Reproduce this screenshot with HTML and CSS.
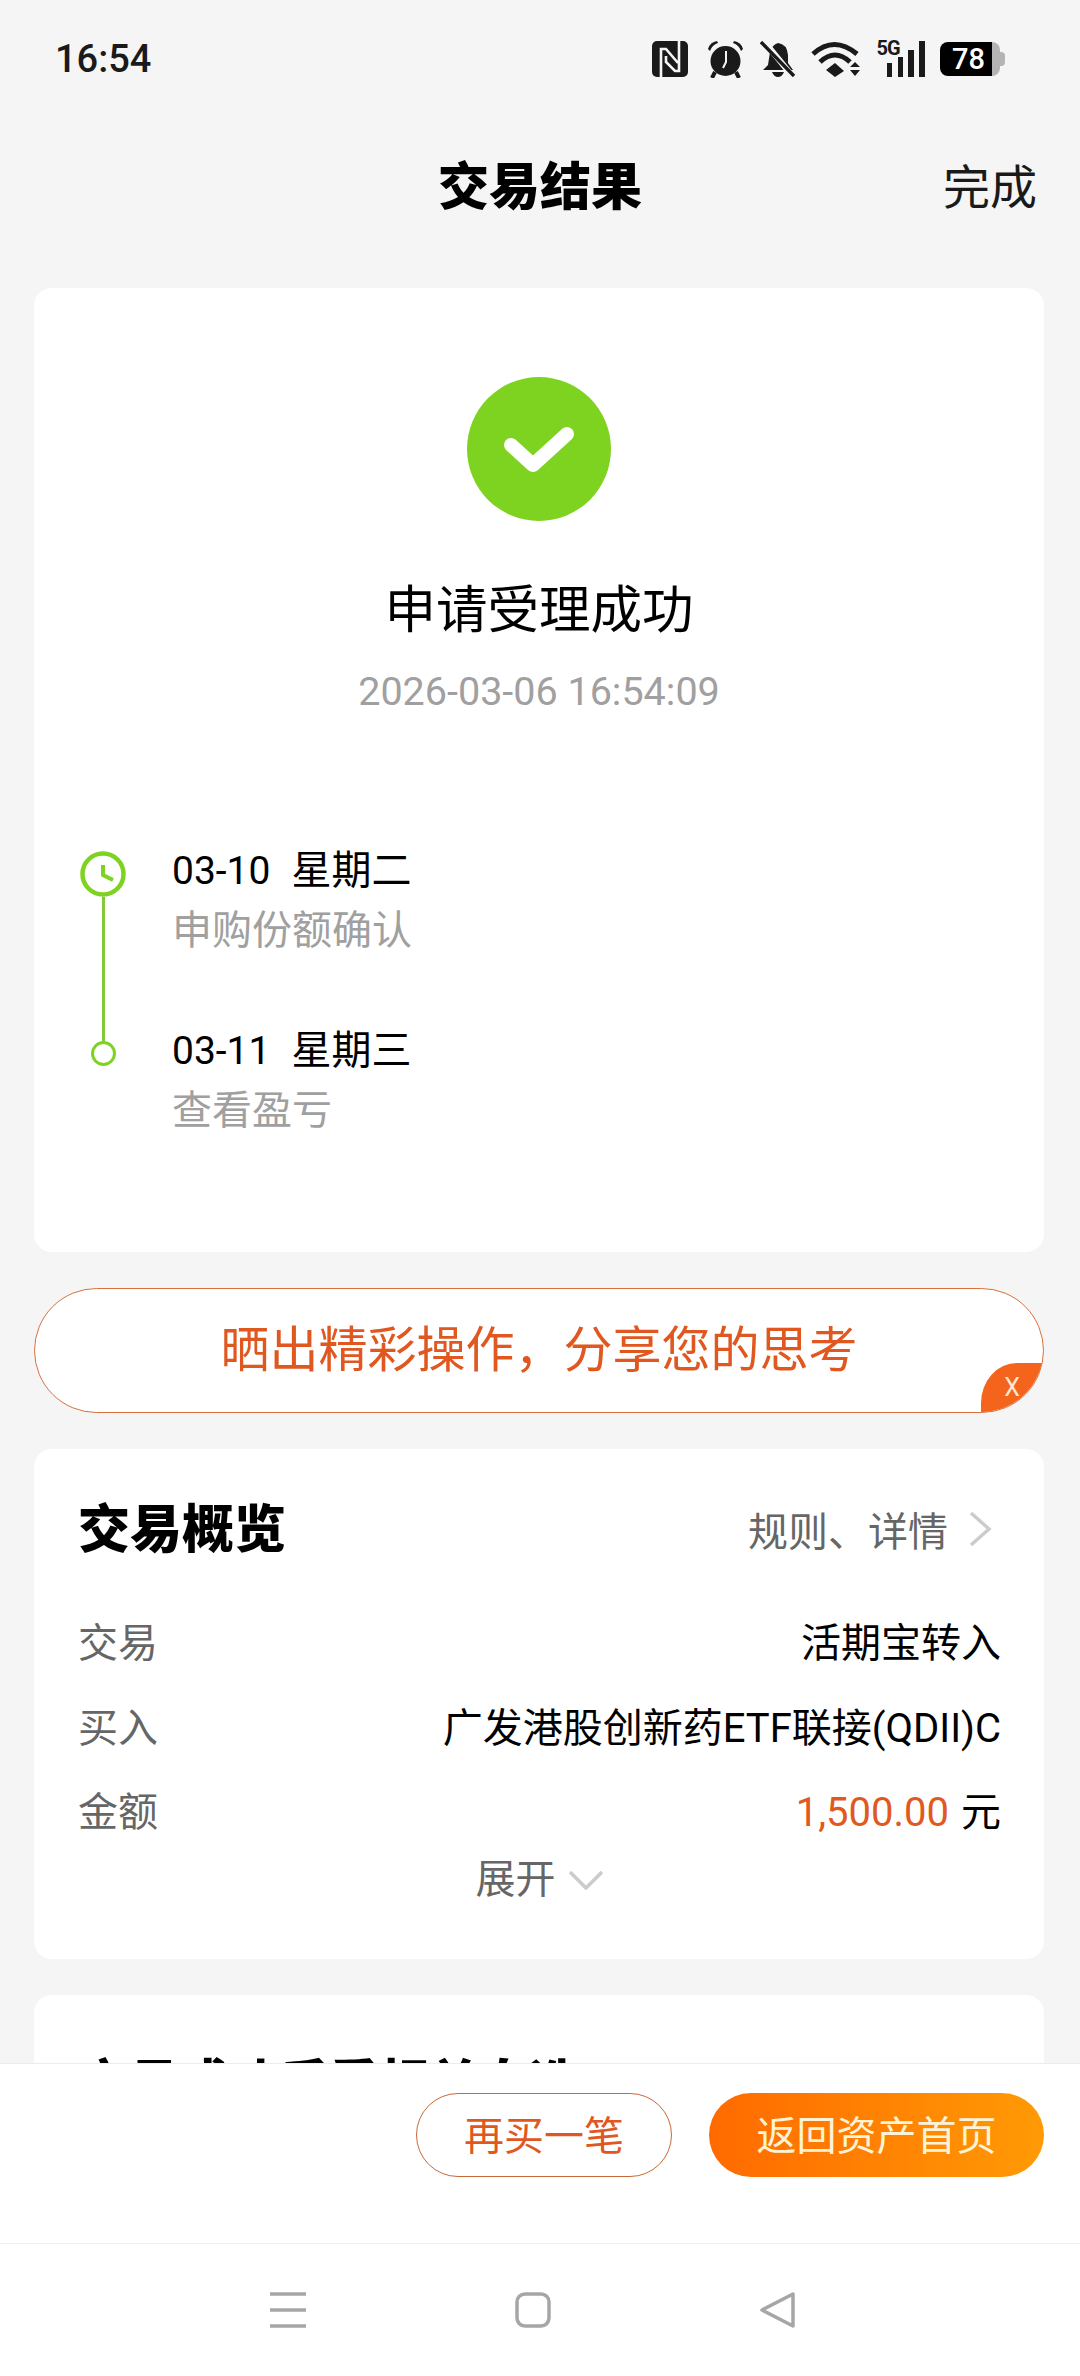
FILE: index.html
```html
<!DOCTYPE html>
<html lang="zh-CN">
<head>
    <meta charset="UTF-8">
    <meta name="viewport" content="width=device-width, initial-scale=1.0">
    <title>交易结果</title>
    <link rel="stylesheet" href="styles.css">
</head>
<body>
<div class="screen">
    <div class="status-bar">
        <span class="status-time">16:54</span>
        <div class="status-icons">
            <svg class="icon-nfc" width="36" height="36" viewBox="0 0 36 36">
                <rect width="36" height="36" rx="5" fill="#1a1a1a"/>
                <path d="M9 36V8h5l12 14M14 15v6l9 9h4V0" fill="none" stroke="#f5f5f5" stroke-width="2.6"/>
            </svg>
            <svg class="icon-alarm" width="37" height="38" viewBox="0 0 37 38">
                <circle cx="18.5" cy="21" r="15" fill="#1a1a1a"/>
                <path d="M1 9Q3 2 10 1L11 3Q5 5 3 11ZM36 9Q34 2 27 1L26 3Q32 5 34 11Z" fill="#1a1a1a"/>
                <path d="M8 32L5 38M29 32L32 38" stroke="#1a1a1a" stroke-width="4"/>
                <path d="M19 11V22L16 28" fill="none" stroke="#f5f5f5" stroke-width="2"/>
            </svg>
            <svg width="36" height="36" viewBox="0 0 36 36">
                <path d="M18 2Q27 3 28 14V22L33 29H3L8 24L10 11Q12 4 18 2ZM12 31H24Q22 36 18 36Q14 36 12 31Z" fill="#1a1a1a"/>
                <path d="M3 -1L33 36" stroke="#f5f5f5" stroke-width="6"/>
                <path d="M1 1L34 35" stroke="#1a1a1a" stroke-width="3.4"/>
            </svg>
            <svg width="50" height="36" viewBox="0 0 50 36">
                <path d="M2 13Q23 -6 46 13M9 21Q24 7 39 21" fill="none" stroke="#1a1a1a" stroke-width="5"/>
                <path d="M24 22L33 30L24 36L15 29Z" fill="#1a1a1a"/>
                <path d="M44 21L49 26H39ZM39 29H49L44 35Z" fill="#1a1a1a"/>
            </svg>
            <div class="net">
                <span class="net-label">5G</span>
                <svg width="48" height="36" viewBox="0 0 48 36">
                    <rect x="10" y="22" width="5" height="14" fill="#1a1a1a"/>
                    <rect x="21" y="16" width="5" height="20" fill="#1a1a1a"/>
                    <rect x="31" y="9" width="6" height="27" fill="#1a1a1a"/>
                    <rect x="42" y="0" width="6" height="36" fill="#1a1a1a"/>
                </svg>
            </div>
            <div class="battery">78</div>
        </div>
    </div>

    <div class="nav-bar">
        <h1 class="nav-title">交易结果</h1>
        <span class="nav-done">完成</span>
    </div>

    <div class="content">
        <section class="card card-result">
            <svg class="result-icon" width="144" height="144" viewBox="0 0 144 144">
                <circle cx="72" cy="72" r="72" fill="#7ed321"/>
                <path d="M44 68L66 88L100 57" fill="none" stroke="#fff" stroke-width="14" stroke-linecap="round" stroke-linejoin="round"/>
            </svg>
            <div class="result-title">申请受理成功</div>
            <div class="result-time">2026-03-06 16:54:09</div>

            <div class="timeline">
                <div class="rail">
                    <svg width="46" height="46" viewBox="0 0 46 46">
                        <circle cx="23" cy="23" r="20.5" fill="#fff" stroke="#7ed321" stroke-width="4.5"/>
                        <path d="M23 14V24L33 29" fill="none" stroke="#7ed321" stroke-width="4"/>
                    </svg>
                    <span class="rail-line"></span>
                    <span class="rail-dot"></span>
                </div>
                <div class="steps">
                    <div class="step">
                        <div class="step-date">03-10<span class="step-day">星期二</span></div>
                        <div class="step-desc">申购份额确认</div>
                    </div>
                    <div class="step">
                        <div class="step-date">03-11<span class="step-day">星期三</span></div>
                        <div class="step-desc">查看盈亏</div>
                    </div>
                </div>
            </div>
        </section>

        <div class="share-banner">
            晒出精彩操作，分享您的思考
            <span class="share-close">X</span>
        </div>

        <section class="card card-overview">
            <div class="card-head">
                <h2 class="card-title">交易概览</h2>
                <div class="card-link">
                    规则、详情
                    <svg width="24" height="36" viewBox="0 0 24 36">
                        <path d="M3 2L21 18L3 34" fill="none" stroke="#cccccc" stroke-width="3.5"/>
                    </svg>
                </div>
            </div>
            <div class="rows">
                <div class="row"><span class="row-label">交易</span><span>活期宝转入</span></div>
                <div class="row"><span class="row-label">买入</span><span>广发港股创新药ETF联接(QDII)C</span></div>
                <div class="row"><span class="row-label">金额</span><span><span class="amount">1,500.00</span>元</span></div>
            </div>
            <div class="toggle">
                展开
                <svg width="36" height="20" viewBox="0 0 36 20">
                    <path d="M2 2L18 18L34 2" fill="none" stroke="#cccccc" stroke-width="3.5"/>
                </svg>
            </div>
        </section>

        <section class="card card-next">
            <h2 class="card-title">交易成功后看相关自选</h2>
        </section>
    </div>

    <div class="action-bar">
        <button class="btn btn-outline">再买一笔</button>
        <button class="btn btn-fill">返回资产首页</button>
    </div>

    <div class="system-nav">
        <svg width="36" height="36" viewBox="0 0 36 36">
            <path d="M0 2H36M0 18H36M0 34H36" stroke="#a6a6a6" stroke-width="3.5"/>
        </svg>
        <svg width="36" height="36" viewBox="0 0 36 36">
            <rect x="2" y="2" width="32" height="32" rx="8" fill="none" stroke="#a6a6a6" stroke-width="3.5"/>
        </svg>
        <svg width="36" height="36" viewBox="0 0 36 36">
            <path d="M33 2V34L2 18Z" fill="none" stroke="#a6a6a6" stroke-width="3.5" stroke-linejoin="round"/>
        </svg>
    </div>
</div>
</body>
</html>
```

FILE: styles.css
```css
* {
    box-sizing: border-box;
}
body {
    margin: 0;
    font-family: Roboto, "Noto Sans CJK SC", sans-serif;
    color: #000;
}
h1, h2 {
    margin: 0;
}
.screen {
    width: 1080px;
    height: 2376px;
    display: flex;
    flex-direction: column;
    background-color: #f5f5f5;
    overflow: hidden;
}

/* status bar */
.status-bar {
    height: 118px;
    flex-shrink: 0;
    display: flex;
    justify-content: space-between;
    align-items: center;
    padding: 0 80px 0 55px;
}
.status-time {
    font-size: 38px;
    font-weight: 500;
    color: #1a1a1a;
}
.status-icons {
    display: flex;
    align-items: center;
    gap: 15.5px;
}
.icon-alarm {
    margin-left: 4px;
}
.net {
    position: relative;
}
.net svg {
    display: block;
}
.net-label {
    position: absolute;
    left: 0;
    top: -4px;
    font-size: 20px;
    line-height: 22px;
    font-weight: 700;
    letter-spacing: -1px;
    color: #1a1a1a;
}
.battery {
    position: relative;
    width: 60px;
    height: 34px;
    padding-left: 12px;
    border-radius: 8px;
    background: linear-gradient(to right, #000 87%, #b4b4b4 87%);
    color: #fff;
    font-size: 29px;
    font-weight: 500;
    line-height: 34px;
}
.battery::after {
    content: "";
    position: absolute;
    right: -5px;
    top: 10px;
    width: 5px;
    height: 14px;
    border-radius: 0 4px 4px 0;
    background-color: #b4b4b4;
}

/* title bar */
.nav-bar {
    height: 134px;
    flex-shrink: 0;
    display: flex;
    justify-content: center;
    align-items: center;
    padding-bottom: 5px;
    position: relative;
}
.nav-title {
    font-size: 51px;
    font-weight: 900;
}
.nav-done {
    position: absolute;
    right: 43px;
    top: 43px;
    font-size: 47px;
    line-height: 54px;
    color: #1a1a1a;
}

/* scrolling part */
.content {
    flex: 1;
    min-height: 0;
    overflow: hidden;
    padding: 36px 36px 0 34px;
}
.card {
    background: white;
    border-radius: 18px;
}
.card-result {
    height: 964px;
    padding-top: 89px;
    margin-bottom: 36px;
    display: flex;
    flex-direction: column;
    align-items: center;
}
.result-icon {
    display: block;
}
.result-title {
    margin-top: 60px;
    font-size: 51.5px;
    line-height: 60px;
}
.result-time {
    margin-top: 26px;
    font-size: 39.5px;
    line-height: 50px;
    color: #a0a0a0;
}

/* timeline */
.timeline {
    align-self: flex-start;
    display: flex;
    margin-top: 124px;
    padding-left: 46px;
}
.rail {
    width: 46px;
    padding-top: 10px;
    display: flex;
    flex-direction: column;
    align-items: center;
}
.rail svg {
    display: block;
}
.rail-line {
    width: 3px;
    height: 144px;
    background-color: #85c93a;
}
.rail-dot {
    width: 25px;
    height: 25px;
    border: 3.5px solid #7ed321;
    border-radius: 50%;
}
.steps {
    margin-left: 46px;
    display: flex;
    flex-direction: column;
    gap: 60px;
}
.step-date {
    font-size: 39px;
    line-height: 60px;
}
.step-day {
    margin-left: 21px;
    font-size: 40px;
}
.step-desc {
    font-size: 40px;
    line-height: 60px;
    color: #a0a0a0;
}

/* share banner */
.share-banner {
    position: relative;
    height: 125px;
    padding-bottom: 10px;
    margin-bottom: 36px;
    border: 1.5px solid #d9703a;
    border-radius: 63px;
    background: white;
    overflow: hidden;
    display: flex;
    justify-content: center;
    align-items: center;
    font-size: 49px;
    color: #e0581f;
}
.share-close {
    position: absolute;
    right: 0;
    bottom: 0;
    width: 62px;
    height: 49px;
    border-top-left-radius: 36px 40px;
    background-color: #f4641c;
    color: #ffe9d6;
    font-size: 25px;
    line-height: 49px;
    text-align: center;
}

/* overview */
.card-overview {
    height: 510px;
    padding: 47px 43px 0 44px;
    margin-bottom: 36px;
}
.card-head {
    display: flex;
    justify-content: space-between;
    align-items: center;
    height: 70px;
}
.card-title {
    font-size: 52px;
    line-height: 70px;
    font-weight: 900;
}
.card-link {
    display: flex;
    align-items: center;
    gap: 20px;
    margin: -5px 9px 0 0;
    font-size: 40px;
    color: #666;
}
.rows {
    margin-top: 50px;
    display: flex;
    flex-direction: column;
    gap: 28.5px;
}
.row {
    display: flex;
    justify-content: space-between;
    font-size: 40px;
    line-height: 56px;
}
.row-label {
    color: #666;
}
.amount {
    margin-right: 12px;
    color: #e0591f;
}
.toggle {
    margin-top: 11px;
    display: flex;
    justify-content: center;
    align-items: center;
    gap: 12px;
    font-size: 40px;
    line-height: 56px;
    color: #666;
}
.card-next {
    height: 200px;
    padding: 54px 45px 0;
}
.card-next .card-title {
    font-size: 50px;
}

/* bottom actions */
.action-bar {
    height: 180px;
    flex-shrink: 0;
    display: flex;
    justify-content: flex-end;
    align-items: flex-start;
    gap: 37px;
    padding: 29px 36px 0 0;
    background: white;
    border-top: 1px solid #ececec;
}
.btn {
    height: 84px;
    border-radius: 42px;
    font-family: inherit;
    font-size: 40px;
    padding: 0 0 5px;
}
.btn-outline {
    width: 256px;
    border: 1.5px solid #c8693a;
    background: white;
    color: #e0581f;
}
.btn-fill {
    width: 335px;
    border: none;
    background: linear-gradient(to right, #ff6a00, #ff9a05);
    color: #fff3d6;
}

/* android nav */
.system-nav {
    height: 133px;
    flex-shrink: 0;
    display: flex;
    justify-content: center;
    gap: 209px;
    padding: 48px 14px 0 0;
    background: white;
    border-top: 1px solid #f0f0f0;
}
```
